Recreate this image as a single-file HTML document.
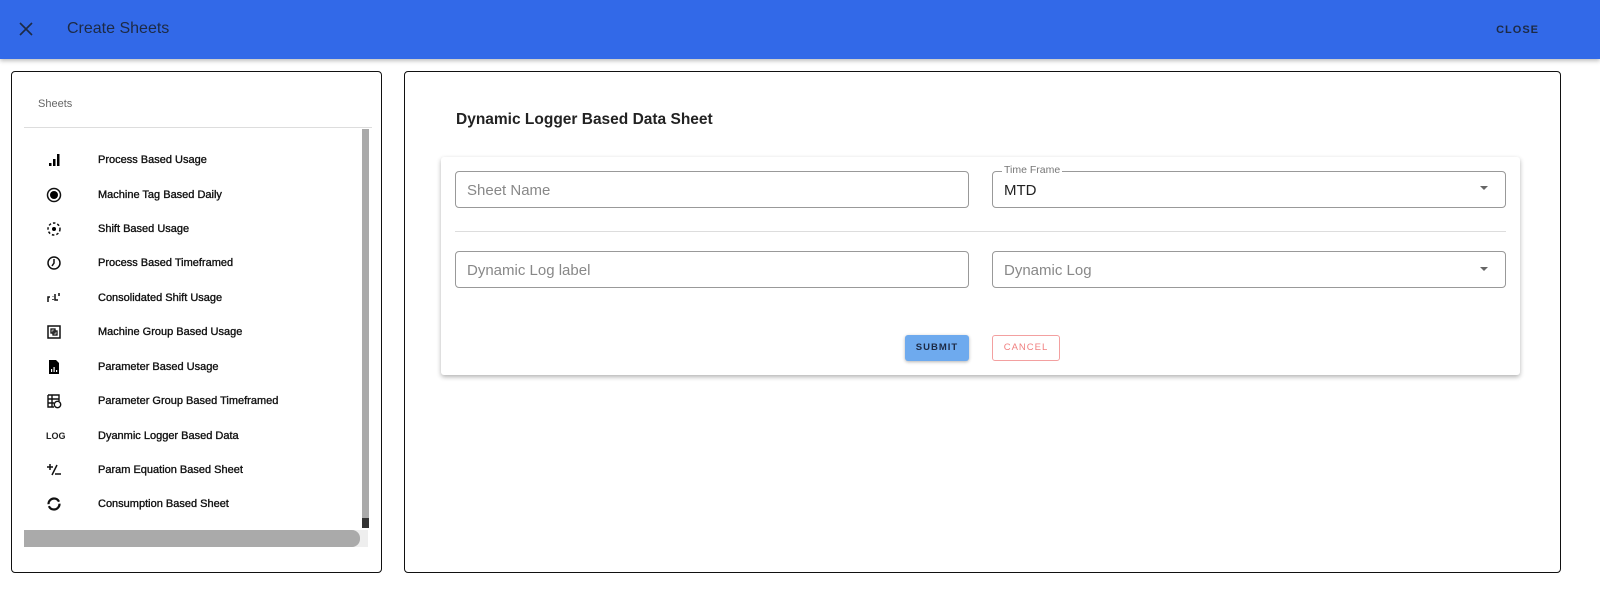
<!DOCTYPE html>
<html><head><style>
*{box-sizing:border-box;margin:0;padding:0}
body{width:1600px;height:595px;background:#fff;font-family:"Liberation Sans",Roboto,sans-serif;position:relative;overflow:hidden;color:#222}
.hdr{position:absolute;left:0;top:0;width:1600px;height:59px;background:#3269e8;box-shadow:0 2px 4px rgba(0,0,0,.25)}
.hdr .t{position:absolute;left:67px;top:20px;font-size:16px;color:#1d2a44}
.hdr .c{position:absolute;right:61px;top:24px;font-size:11px;font-weight:bold;letter-spacing:1px;color:#1d2a44}
.lp{position:absolute;left:11px;top:71px;width:371px;height:502px;border:1px solid #111;border-radius:4px}
.rp{position:absolute;left:404px;top:71px;width:1157px;height:502px;border:1px solid #111;border-radius:4px}
.sh{position:absolute;left:38px;top:98px;font-size:11px;color:#666}
.div{position:absolute;left:24px;top:127px;width:348px;height:1px;background:#ddd}
.vs{position:absolute;left:362px;top:129px;width:7px;height:399px;background:#aaa}
.vs2{position:absolute;left:362px;top:518px;width:7px;height:10px;background:#333}
.hs{position:absolute;left:24px;top:530px;width:336px;height:17px;background:#aaa;border-radius:0 8px 8px 0}
.hsb{position:absolute;left:24px;top:530px;width:344px;height:17px;background:#eee}
.it{position:absolute;left:98px;font-size:11px;font-weight:normal;color:#111;-webkit-text-stroke:0.35px #111;transform:translateY(-50%)}
.ic{position:absolute;left:46px;width:16px;height:16px;transform:translateY(-50%)}
.title{position:absolute;left:456px;top:111px;font-size:15.5px;font-weight:bold;color:#222}
.card{position:absolute;left:441px;top:157px;width:1079px;height:218px;background:#fff;box-shadow:0 2px 5px rgba(0,0,0,.3);border-radius:3px}
.f{position:absolute;height:37px;border:1px solid #999;border-radius:4px;font-size:15px;color:#888;padding:10px 11px}
.f.v{color:#222}
.lbl{position:absolute;left:1002px;top:164px;font-size:10.5px;color:#777;background:#fff;padding:0 2px}
.arr{position:absolute;width:0;height:0;border-left:4px solid transparent;border-right:4px solid transparent;border-top:4px solid #666}
.hr{position:absolute;left:455px;top:231px;width:1051px;height:1px;background:#ddd}
.sub{position:absolute;left:905px;top:335px;width:64px;height:26px;background:#6eaaee;border-radius:3px;font-size:9.5px;font-weight:bold;letter-spacing:1px;text-align:center;line-height:26px;color:#1d2a44;box-shadow:0 1px 3px rgba(0,0,0,.3)}
.can{position:absolute;left:992px;top:335px;width:68px;height:26px;border:1px solid #f3a0a0;border-radius:3px;font-size:9.5px;letter-spacing:1px;text-align:center;line-height:24px;color:#f08080}
</style></head><body>
<div class="hdr">
<svg style="position:absolute;left:19px;top:22px" width="14" height="14" viewBox="0 0 14 14"><path d="M1 1L13 13M13 1L1 13" stroke="#1d2a44" stroke-width="1.6"/></svg>
<div class="t">Create Sheets</div><div class="c">CLOSE</div></div>
<div class="lp"></div>
<div class="sh">Sheets</div><div class="div"></div>
<div class="vs"></div><div class="vs2"></div><div class="hsb"></div><div class="hs"></div>

<svg class="ic" style="top:160px" viewBox="0 0 16 16"><rect x="3" y="11" width="2.5" height="3"/><rect x="7" y="7" width="2.5" height="7"/><rect x="11" y="2" width="2.5" height="12"/></svg>
<div class="it" style="top:160px">Process Based Usage</div>
<svg class="ic" style="top:195px" viewBox="0 0 16 16"><circle cx="8" cy="8" r="6.5" fill="none" stroke="#111" stroke-width="1.5"/><circle cx="8" cy="8" r="4"/></svg>
<div class="it" style="top:195px">Machine Tag Based Daily</div>
<svg class="ic" style="top:229px" viewBox="0 0 16 16"><circle cx="8" cy="8" r="6" fill="none" stroke="#111" stroke-width="1.5" stroke-dasharray="2.5 2"/><circle cx="8" cy="8" r="2"/></svg>
<div class="it" style="top:229px">Shift Based Usage</div>
<svg class="ic" style="top:263px" viewBox="0 0 16 16"><circle cx="8" cy="8" r="6" fill="none" stroke="#111" stroke-width="1.5"/><path d="M8 4V8L6 11" fill="none" stroke="#111" stroke-width="1.5"/></svg>
<div class="it" style="top:263px">Process Based Timeframed</div>
<svg class="ic" style="top:298px" viewBox="0 0 16 16"><path d="M2 12V7H4M7 6V6.5M7 9V10M9 4v6h3M13 3v3" fill="none" stroke="#111" stroke-width="1.5"/></svg>
<div class="it" style="top:298px">Consolidated Shift Usage</div>
<svg class="ic" style="top:332px" viewBox="0 0 16 16"><rect x="2" y="2" width="12" height="12" fill="none" stroke="#111" stroke-width="1.5"/><rect x="5" y="5" width="4" height="4" fill="none" stroke="#111" stroke-width="1.3"/><rect x="7" y="7" width="4" height="4" fill="none" stroke="#111" stroke-width="1.3"/></svg>
<div class="it" style="top:332px">Machine Group Based Usage</div>
<svg class="ic" style="top:367px" viewBox="0 0 16 16"><path d="M3 1H10L13 4V15H3Z"/><rect x="5" y="10" width="1.2" height="3" fill="#fff"/><rect x="7.5" y="8" width="1.2" height="5" fill="#fff"/><rect x="10" y="11" width="1.2" height="2" fill="#fff"/></svg>
<div class="it" style="top:367px">Parameter Based Usage</div>
<svg class="ic" style="top:401px" viewBox="0 0 16 16"><path d="M2 2H13V8M2 2V14H8M2 6H13M2 10H8M6 2V14" fill="none" stroke="#111" stroke-width="1.4"/><circle cx="11.5" cy="11.5" r="3.2" fill="none" stroke="#111" stroke-width="1.4"/></svg>
<div class="it" style="top:401px">Parameter Group Based Timeframed</div>
<div class="ic" style="top:436px;font-size:9px;font-weight:bold;line-height:16px;letter-spacing:0">LOG</div>
<div class="it" style="top:436px">Dyanmic Logger Based Data</div>
<svg class="ic" style="top:470px" viewBox="0 0 16 16"><path d="M1 5H7M4 2V8M11 3L6 13M9 12H15" stroke="#111" stroke-width="1.5" fill="none"/></svg>
<div class="it" style="top:470px">Param Equation Based Sheet</div>
<svg class="ic" style="top:504px" viewBox="0 0 16 16"><circle cx="8" cy="8" r="5.5" fill="none" stroke="#111" stroke-width="2.2" stroke-dasharray="15 2"/></svg>
<div class="it" style="top:504px">Consumption Based Sheet</div>

<div class="rp"></div>
<div class="title">Dynamic Logger Based Data Sheet</div>
<div class="card"></div>
<div class="f" style="left:455px;top:171px;width:514px">Sheet Name</div>
<div class="f v" style="left:992px;top:171px;width:514px">MTD</div>
<div class="lbl">Time Frame</div>
<div class="arr" style="left:1480px;top:186px"></div>
<div class="hr"></div>
<div class="f" style="left:455px;top:251px;width:514px">Dynamic Log label</div>
<div class="f" style="left:992px;top:251px;width:514px">Dynamic Log</div>
<div class="arr" style="left:1480px;top:267px"></div>
<div class="sub">SUBMIT</div>
<div class="can">CANCEL</div>
</body></html>
